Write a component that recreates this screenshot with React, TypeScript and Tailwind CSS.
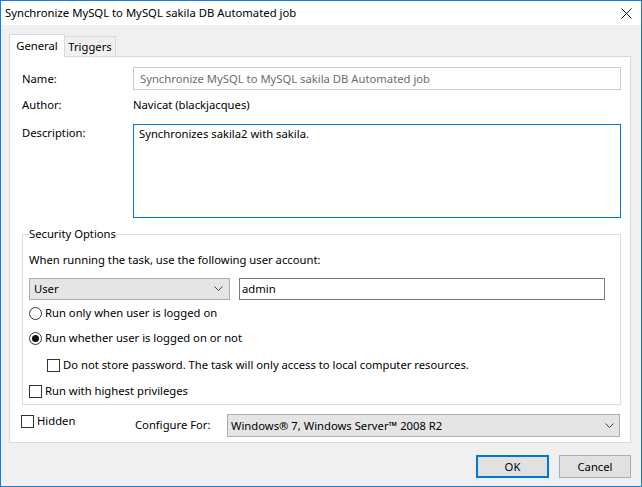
import React from "react";

const FONT = { fontFamily: '"Noto Sans", "Open Sans", sans-serif' };

function Chevron() {
  return (
    <svg width="9" height="6" viewBox="0 0 9 6" className="shrink-0">
      <path d="M0.5 0.5 L4.5 4.5 L8.5 0.5" fill="none" stroke="#444" strokeWidth="1" />
    </svg>
  );
}

function Radio({ checked, label }: { checked?: boolean; label: string }) {
  return (
    <div className="flex items-center h-[16px]">
      <span className="w-[13px] h-[13px] rounded-full border border-[#333] bg-white flex items-center justify-center shrink-0">
        {checked && <span className="w-[7px] h-[7px] rounded-full bg-[#111]" />}
      </span>
      <span className="ml-[3px]">{label}</span>
    </div>
  );
}

function Check({ label }: { label: string }) {
  return (
    <div className="flex items-center h-[16px]">
      <span className="w-[13px] h-[13px] border border-[#333] bg-white shrink-0" />
      <span className="ml-[3px]">{label}</span>
    </div>
  );
}

export default function App() {
  return (
    <div
      style={FONT}
      className="w-[642px] h-[487px] border border-[#1a7fd0] bg-[#f0f0f0] flex flex-col text-[11.25px] text-black leading-[16px] overflow-hidden"
    >
      {/* Title bar */}
      <div className="h-[24px] bg-white flex items-center justify-between pl-[4px] pr-[9px] shrink-0">
        <span className="text-[11.3px]">Synchronize MySQL to MySQL sakila DB Automated job</span>
        <svg width="11" height="11" viewBox="0 0 11 11">
          <path d="M0.5 0.5 L10.5 10.5 M10.5 0.5 L0.5 10.5" stroke="#111" strokeWidth="1" />
        </svg>
      </div>

      {/* Body */}
      <div className="flex-1 flex flex-col pl-[8px] pr-[10px] pt-[9px]">
        {/* Tabs */}
        <div className="flex items-end relative z-10 -mb-px">
          <div className="h-[23px] w-[56px] border border-b-0 border-[#d9d9d9] bg-white flex items-center justify-center">
            General
          </div>
          <div className="h-[21px] w-[51px] border border-l-0 border-[#d9d9d9] bg-[#f0f0f0] flex items-center justify-center">
            Triggers
          </div>
        </div>

        {/* Panel */}
        <div className="w-[622px] border border-[#d9d9d9] bg-white pl-[12px] pr-[9px] pt-[10px] pb-[5px] flex flex-col">
          <div className="flex items-center h-[23px]">
            <span className="w-[111px] shrink-0">Name:</span>
            <div className="flex-1 h-[23px] border border-[#cccccc] flex items-center px-[6px] text-[#6d6d6d]">
              Synchronize MySQL to MySQL sakila DB Automated job
            </div>
          </div>
          <div className="flex items-center h-[20px] mt-[5px]">
            <span className="w-[111px] shrink-0">Author:</span>
            <span>Navicat (blackjacques)</span>
          </div>
          <div className="flex items-start mt-[9px]">
            <span className="w-[111px] shrink-0 pt-[1px]">Description:</span>
            <div className="flex-1 h-[94px] border border-[#0078d7] px-[5px] pt-[1px]">
              Synchronizes sakila2 with sakila.
            </div>
          </div>

          <fieldset className="mt-[8px] border border-[#dcdcdc] pl-[6px] pr-[15px] pb-[5px]">
            <legend className="px-0">Security Options</legend>
            <div className="mt-[10px] h-[16px] flex items-center">
              When running the task, use the following user account:
            </div>
            <div className="mt-[10px] flex items-center h-[22px]">
              <div className="w-[201px] h-[22px] bg-[#e5e5e5] border border-[#adadad] flex items-center justify-between pl-[4px] pr-[6px]">
                <span>User</span>
                <Chevron />
              </div>
              <div className="ml-[9px] flex-1 h-[22px] border border-[#7a7a7a] bg-white flex items-center px-[2px]">
                admin
              </div>
            </div>
            <div className="mt-[5px]">
              <Radio label="Run only when user is logged on" />
            </div>
            <div className="mt-[9px]">
              <Radio checked label="Run whether user is logged on or not" />
            </div>
            <div className="mt-[11px] ml-[18px]">
              <Check label="Do not store password. The task will only access to local computer resources." />
            </div>
            <div className="mt-[10px]">
              <Check label="Run with highest privileges" />
            </div>
          </fieldset>

          <div className="mt-[9px] flex items-start h-[23px]">
            <div className="w-[114px] -ml-[1px] mt-[-1px] shrink-0">
              <Check label="Hidden" />
            </div>
            <span className="w-[92px] shrink-0 mt-[3px]">Configure For:</span>
            <div className="flex-1 mr-[1px] h-[23px] bg-[#e5e5e5] border border-[#adadad] flex items-center justify-between pl-[3px] pr-[5px]">
              <span>Windows® 7, Windows Server™ 2008 R2</span>
              <Chevron />
            </div>
          </div>
        </div>

        {/* Buttons */}
        <div className="flex justify-end gap-[10px] mt-[12px]">
          <button className="w-[73px] h-[23px] bg-[#e1e1e1] border-2 border-[#0078d7] flex items-center justify-center">
            OK
          </button>
          <button className="w-[72px] h-[23px] bg-[#e1e1e1] border border-[#adadad] flex items-center justify-center">
            Cancel
          </button>
        </div>
      </div>
    </div>
  );
}
